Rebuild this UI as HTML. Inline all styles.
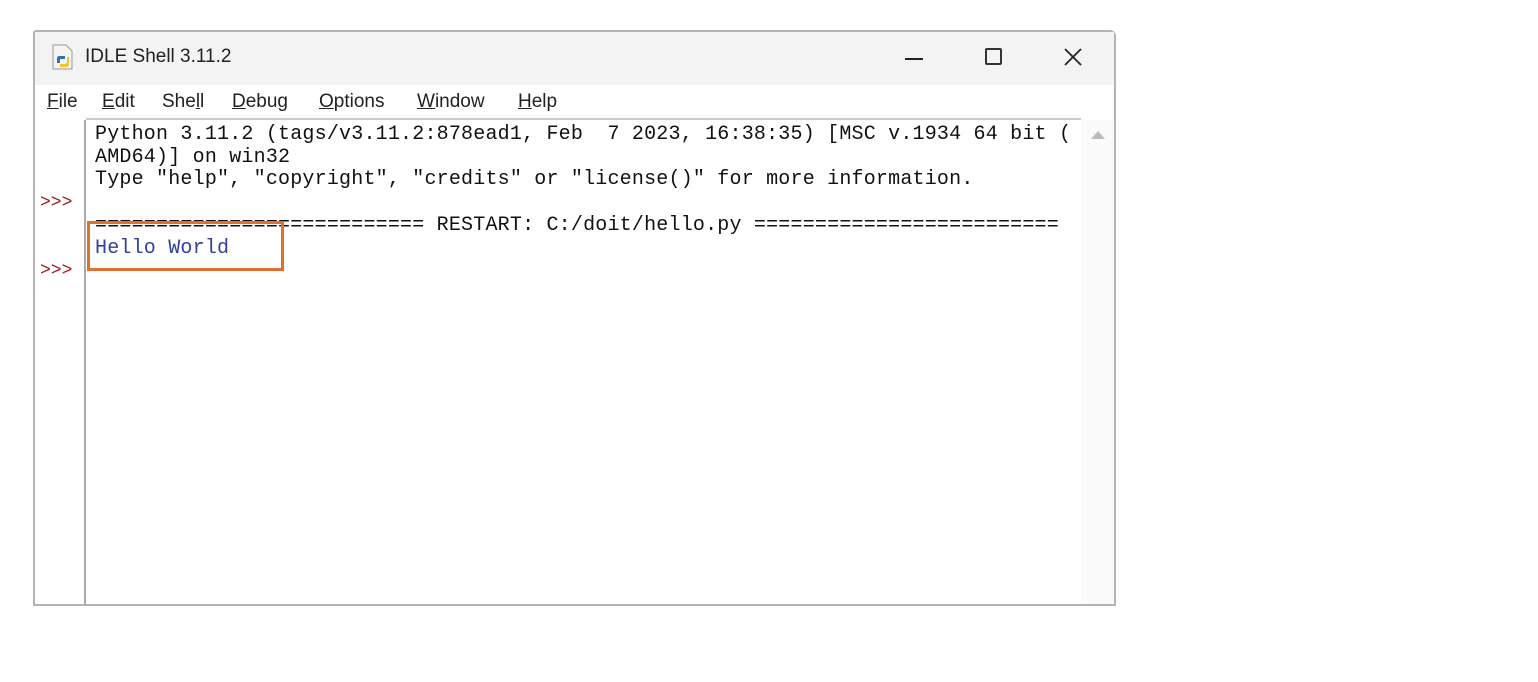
<!DOCTYPE html>
<html><head><meta charset="utf-8"><style>
*{margin:0;padding:0;box-sizing:border-box}
body{width:1538px;height:682px;background:#fff;position:relative;overflow:hidden;font-family:"Liberation Sans","Noto Sans CJK KR",sans-serif}
.win{position:absolute;left:33px;top:30px;width:1083px;height:576px;border:2px solid #b4b4b4;background:#fff;border-radius:3px 6px 0 0}
.title{position:absolute;left:0;top:0;width:100%;height:53px;background:#f3f3f3}
.ttext{position:absolute;left:50px;top:14px;font-size:19px;color:#222}
.menu{position:absolute;left:0;top:53px;width:100%;height:35px;background:#fff;font-size:19px;color:#222}
.menu span{position:absolute;top:6px}
.menu u{text-decoration:underline}
.gut{position:absolute;left:0;top:88px;width:51px;height:484px;background:#fff;border-right:2px solid #aaa}
.txt{position:absolute;left:51px;top:86px;width:995px;height:486px;border-top:2px solid #ccc}
.sb{position:absolute;left:1046px;top:88px;width:33px;height:484px;background:#fafafa}
pre{position:absolute;font-family:"Liberation Mono",monospace;font-size:20px;line-height:22.7px;color:#111;letter-spacing:0.2px}
.p{color:#a02020;position:absolute;left:6px;font-family:"Liberation Mono",monospace;font-size:18px}
.box{position:absolute;left:87px;top:221px;width:197px;height:50px;border:3px solid #e07030}
</style></head><body>
<div class="win">
 <div class="title">
  <svg style="position:absolute;left:16px;top:12px" width="24" height="26" viewBox="0 0 24 26"><path d="M2 1h13l6 6v18H2z" fill="#f4f4f4" stroke="#999"/><path d="M8 12h6v3H9v4H6v-5c0-1 1-2 2-2z" fill="#3a6fb0"/><path d="M16 13v5c0 1-1 2-2 2H9v3h6c1 0 3-1 3-3v-7z" fill="#f2c230"/></svg>
  <div class="ttext">IDLE Shell 3.11.2</div>
  <div style="position:absolute;left:870px;top:26px;width:18px;height:2px;background:#222"></div>
  <div style="position:absolute;left:950px;top:16px;width:17px;height:17px;border:2px solid #333;border-radius:2px"></div>
  <svg style="position:absolute;left:1028px;top:15px" width="20" height="20" viewBox="0 0 20 20"><path d="M2 2L18 18M18 2L2 18" stroke="#222" stroke-width="1.8"/></svg>
 </div>
 <div class="menu">
  <span style="left:12px"><u>F</u>ile</span>
  <span style="left:67px"><u>E</u>dit</span>
  <span style="left:127px">She<u>l</u>l</span>
  <span style="left:197px"><u>D</u>ebug</span>
  <span style="left:284px"><u>O</u>ptions</span>
  <span style="left:382px"><u>W</u>indow</span>
  <span style="left:483px"><u>H</u>elp</span>
 </div>
 <div class="gut"></div>
 <div class="txt"></div>
 <div class="sb"><svg style="position:absolute;left:10px;top:10px" width="14" height="10"><path d="M0 9L7 1L14 9z" fill="#bbb"/></svg></div>
</div>
<div class="p" style="top:193px;left:40px">&gt;&gt;&gt;</div>
<div class="p" style="top:261px;left:40px">&gt;&gt;&gt;</div>
<pre style="left:95px;top:124px">Python 3.11.2 (tags/v3.11.2:878ead1, Feb  7 2023, 16:38:35) [MSC v.1934 64 bit (
AMD64)] on win32
Type "help", "copyright", "credits" or "license()" for more information.

=========================== RESTART: C:/doit/hello.py =========================
<span style="color:#3040a0">Hello World</span></pre>
<div class="box"></div>
</body></html>
